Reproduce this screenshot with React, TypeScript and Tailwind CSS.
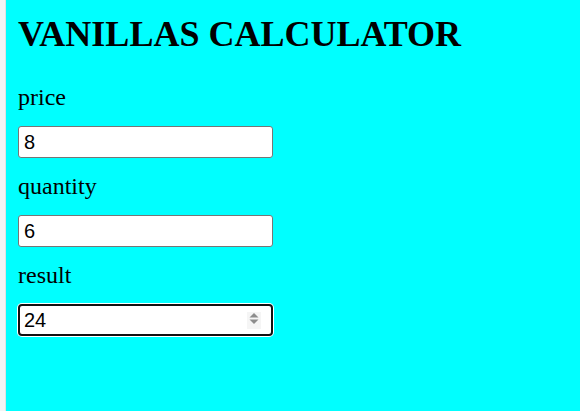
import { useState } from "react";

const serif = "font-['Liberation_Serif','Times_New_Roman',serif]";
const sans = "font-['Liberation_Sans',Arial,sans-serif]";

function Field({ label, value, focused }: { label: string; value: string; focused?: boolean }) {
  return (
    <div className="flex flex-col">
      <p className={`${serif} h-[28px] text-[24px] leading-[28px] text-black`}>{label}</p>
      <div className="relative mt-[15px] w-[255px]">
        <input
          type="text"
          readOnly
          value={value}
          className={
            focused
              ? `${sans} block h-[32px] w-[255px] rounded-[4px] border-2 border-[#111] bg-white px-[4px] text-[20px] text-black shadow-[0_0_0_1px_#fff] outline-none`
              : `${sans} block h-[32px] w-[255px] rounded-[3px] border border-[#767676] bg-white px-[5px] text-[20px] text-black outline-none`
          }
        />
        {focused && (
          // number spinner
          <svg
            className="absolute right-[12px] top-[8px]"
            width="14"
            height="17"
            viewBox="0 0 14 17"
          >
            <rect x="0" y="0" width="14" height="17" fill="#f5f5f5" />
            <path d="M2.5 5.5 L7 1 L11.5 5.5 Z" fill="#8d8d8d" />
            <path d="M2.5 7.5 L7 12 L11.5 7.5 Z" fill="#8d8d8d" />
          </svg>
        )}
      </div>
    </div>
  );
}

export default function App() {
  const [price] = useState("8");
  const [quantity] = useState("6");
  const result = "24";

  return (
    <div className="flex min-h-[411px] w-full">
      <div className="w-[6px] shrink-0 border-r border-[#e2e2e2] bg-[#f4f4f4]" />
      <div className="flex-1 bg-[#00ffff] pl-[12px]">
        <h1 className={`${serif} mt-[14px] h-[40px] text-[36px] font-bold leading-[40px] text-black`}>
          VANILLAS CALCULATOR
        </h1>
        <div className="mt-[29px] flex flex-col gap-[14px]">
          <Field label="price" value={price} />
          <Field label="quantity" value={quantity} />
          <Field label="result" value={result} focused />
        </div>
      </div>
    </div>
  );
}
